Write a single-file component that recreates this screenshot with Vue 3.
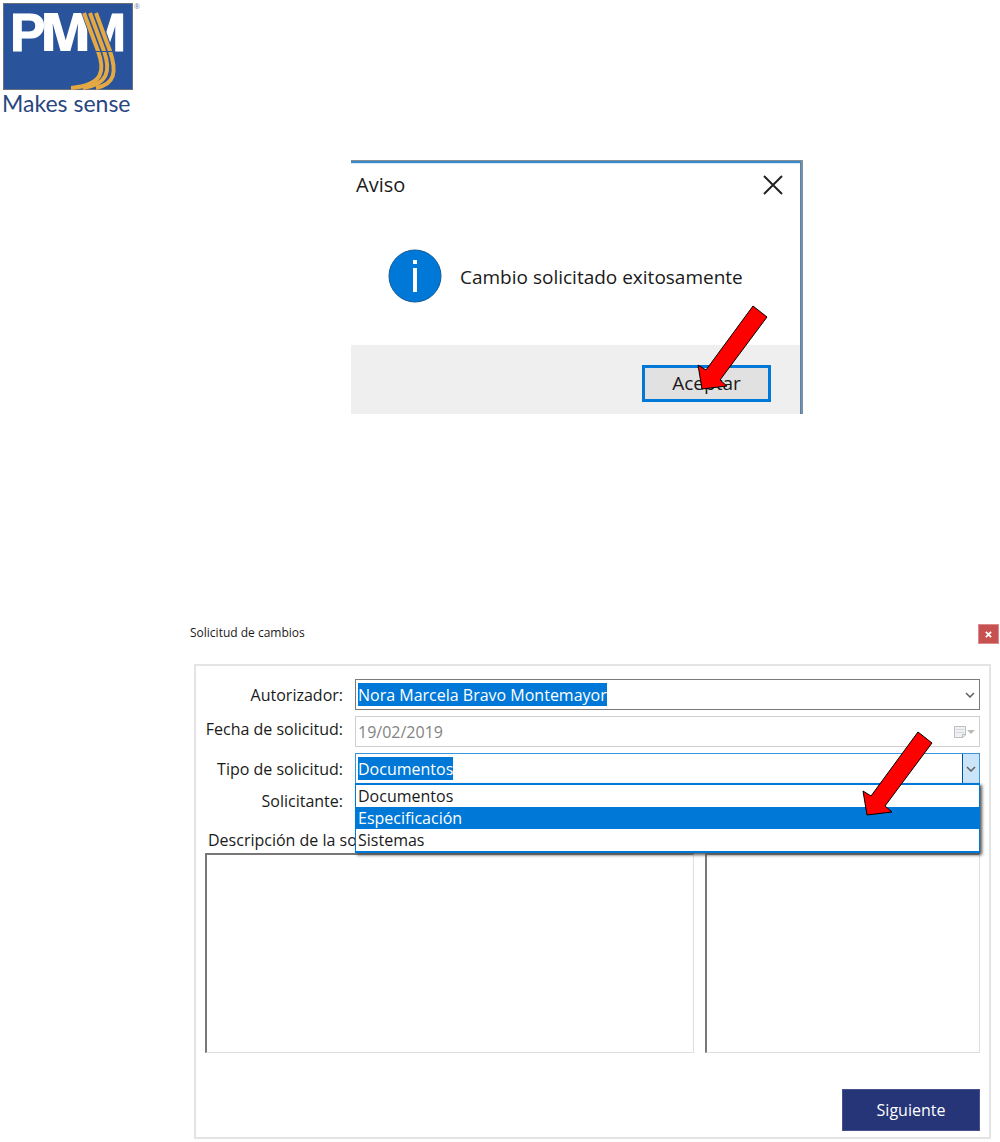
<template>
  <div class="page">
    <header class="brand">
      <svg class="logo" viewBox="0 0 144 118" role="img" aria-label="PMM Makes sense">
        <defs>
          <clipPath id="right-m">
            <path d="M96 8H130V54H112Z" />
          </clipPath>
        </defs>
        <rect x="3.5" y="3.5" width="129" height="86" fill="#29539b" stroke="#6b7078" />
        <g class="logo-letters">
          <text x="10" y="51">P</text>
          <text class="logo-wide" x="40" y="51">M</text>
          <text x="82" y="51" clip-path="url(#right-m)">M</text>
        </g>
        <g fill="none" stroke="#29539b" stroke-width="6">
          <path d="M84 12L98 51" />
          <path d="M90 12L104 51" />
          <path d="M96 12L110 51" />
        </g>
        <g fill="none" stroke="#e5a944" stroke-width="4">
          <path d="M84 13L98 51C105 70 104 85 71 88" />
          <path d="M90 13L104 51C111 71 108 84 83 88" />
          <path d="M96 13L110 51C117 72 115 84 96 88" />
        </g>
        <path d="M94 51.5H115" stroke="#29539b" stroke-width="1" />
        <text class="logo-tagline" x="2" y="112">Makes sense</text>
        <text class="logo-mark" x="134" y="9">®</text>
      </svg>
    </header>

    <section class="notice" role="dialog" aria-labelledby="notice-title">
      <div class="notice-head">
        <h2 id="notice-title">Aviso</h2>
        <button class="notice-close" type="button" aria-label="Cerrar">
          <svg viewBox="0 0 20 20"><path d="M1 1L19 19M19 1L1 19" /></svg>
        </button>
      </div>
      <div class="notice-body">
        <svg class="info" viewBox="0 0 54 54">
          <circle cx="27" cy="27" r="26" fill="#0078d7" stroke="#135995" />
          <path d="M25 11h4v4h-4zM25 19h4v24h-4z" fill="#fff" />
        </svg>
        <p>Cambio solicitado exitosamente</p>
      </div>
      <div class="notice-foot">
        <button class="accept" type="button">Aceptar</button>
      </div>
      <svg class="arrow arrow-accept" viewBox="0 0 72 86"><path :d="arrow" /></svg>
    </section>

    <section class="request">
      <div class="request-head">
        <h2>Solicitud de cambios</h2>
        <button class="request-close" type="button" aria-label="Cerrar">
          <svg viewBox="0 0 8 8"><path d="M1 1L7 7M7 1L1 7" /></svg>
        </button>
      </div>

      <form class="panel" @submit.prevent>
        <div class="row">
          <label for="autorizador">Autorizador:</label>
          <div class="combo">
            <select id="autorizador">
              <option>Nora Marcela Bravo Montemayor</option>
            </select>
            <svg class="chevron" viewBox="0 0 10 6"><path d="M1 1L5 5L9 1" /></svg>
          </div>
        </div>

        <div class="row">
          <label class="label-high" for="fecha">Fecha de solicitud:</label>
          <div class="combo combo-disabled">
            <input id="fecha" type="text" value="19/02/2019" disabled />
            <svg class="calendar" viewBox="0 0 22 14">
              <path d="M1.500 1.500H12.500V10L10 12.500H1.500Z" fill="#eef0f2" stroke="#bdbdbd" />
              <path d="M3 4.500H11M3 7.500H11" stroke="#d5dade" />
              <path d="M12.500 9.500H9.500V12.500" stroke="#bdbdbd" />
              <path d="M14 5H22L18 9Z" fill="#b9bbb2" />
            </svg>
          </div>
        </div>

        <div class="row">
          <label for="tipo">Tipo de solicitud:</label>
          <div class="combo combo-open">
            <select id="tipo" v-model="selected">
              <option v-for="t in types" :key="t">{{ t }}</option>
            </select>
            <span class="drop">
              <svg class="chevron" viewBox="0 0 10 6"><path d="M1 1L5 5L9 1" /></svg>
            </span>
            <ul class="list" role="listbox" aria-label="Tipo de solicitud">
              <li
                v-for="t in types"
                :key="t"
                role="option"
                :aria-selected="t === hovered"
                :class="{ active: t === hovered }"
                @mouseenter="hovered = t"
                @click="selected = t"
              >{{ t }}</li>
            </ul>
            <svg class="arrow arrow-option" viewBox="0 0 72 86"><path :d="arrow" /></svg>
          </div>
        </div>

        <div class="row row-short">
          <label for="solicitante">Solicitante:</label>
          <input id="solicitante" class="plain" type="text" />
        </div>

        <label class="description-label" for="descripcion">Descripción de la so</label>
        <div class="areas">
          <textarea id="descripcion"></textarea>
          <textarea aria-label="Observaciones"></textarea>
        </div>

        <div class="actions">
          <button class="next" type="submit">Siguiente</button>
        </div>
      </form>
    </section>
  </div>
</template>

<script setup>
import { ref } from 'vue';

const types = ['Documentos', 'Especificación', 'Sistemas'];
const selected = ref('Documentos');
const hovered = ref('Especificación');

const arrow = 'M56 1L70 12L23 75L30 81L5 84L1 60L9 65Z';
</script>

<style>
body {
  margin: 0;
  background: #fff;
}
</style>

<style scoped>
.page {
  font-family: "Open Sans", "Noto Sans", sans-serif;
  font-size: 16px;
  color: #1a1a1a;
}

h2,
p,
ul {
  margin: 0;
  padding: 0;
  font-weight: 400;
}

button,
input,
select,
textarea {
  box-sizing: border-box;
  margin: 0;
  font: inherit;
}

.brand {
  height: 160px;
}

.logo {
  display: block;
  width: 144px;
  height: 118px;
}

.logo-letters {
  font-family: "Liberation Sans", sans-serif;
  font-size: 53px;
  font-weight: 700;
  fill: #fff;
  stroke: #fff;
  stroke-width: 1;
}

.logo-wide {
  font-family: "Open Sans", sans-serif;
  font-weight: 800;
  stroke: none;
}

.logo-tagline {
  font-family: Lato, sans-serif;
  font-size: 23px;
  fill: #29467f;
}

.logo-mark {
  font-size: 7px;
  fill: #6f7fa3;
}

/* notice dialog */
.notice {
  position: relative;
  box-sizing: border-box;
  max-width: 452px;
  margin-left: 351px;
  border-top: 3px solid #3c8acb;
  border-right: 3px solid #3c8acb;
  box-shadow: inset 0 1px #d6e9f8;
}

.notice::before {
  content: "";
  position: absolute;
  top: -3px;
  right: -3px;
  bottom: 0;
  left: 0;
  border-top: 1px solid #868d93;
  border-right: 2px solid #868d93;
  pointer-events: none;
}

.notice-head {
  display: flex;
  justify-content: space-between;
  align-items: center;
  height: 43px;
  padding: 0 17px 0 5px;
}

.notice-head h2 {
  font-size: 20px;
}

.notice-close {
  width: 20px;
  height: 20px;
  padding: 0;
  border: 0;
  background: none;
}

.notice-close svg {
  display: block;
  width: 20px;
  height: 20px;
  stroke: #222;
  stroke-width: 2;
}

.notice-body {
  display: flex;
  align-items: center;
  gap: 18px;
  height: 139px;
  padding-left: 37px;
}

.notice-body p {
  font-size: 19px;
  padding-top: 2px;
}

.info {
  width: 54px;
  height: 54px;
}

.notice-foot {
  display: flex;
  justify-content: flex-end;
  align-items: center;
  height: 69px;
  padding-right: 29px;
  padding-top: 7px;
  box-sizing: border-box;
  background: #efefef;
}

.accept {
  width: 129px;
  height: 37px;
  padding: 0;
  border: 3px solid #0078d7;
  background: #e1e1e1;
  color: #1a1a1a;
  font-size: 19px;
  line-height: 30px;
}

.arrow {
  position: absolute;
  z-index: 3;
  width: 72px;
  height: 86px;
  pointer-events: none;
  fill: #f00;
  stroke: #000;
}

.arrow-accept {
  top: 142px;
  right: 31px;
}

.arrow-option {
  top: -23px;
  right: 45px;
}

/* change request window */
.request {
  margin-top: 210px;
  padding-left: 190px;
}

.request-head {
  display: flex;
  justify-content: space-between;
  align-items: flex-start;
  height: 40px;
  padding-right: 1px;
}

.request-head h2 {
  font-size: 12px;
  line-height: 18px;
}

.request-close {
  display: flex;
  justify-content: center;
  align-items: center;
  width: 21px;
  height: 20px;
  padding: 0;
  border: 1px solid #dd8a8d;
  background: #c75050;
}

.request-close svg {
  width: 7px;
  height: 7px;
  stroke: #fff;
  stroke-width: 2;
}

.panel {
  display: flex;
  flex-direction: column;
  gap: 6px;
  margin: 0 9px 0 4px;
  padding: 13px 9px 6px;
  border: 2px solid #e4e4e4;
}

.row {
  display: grid;
  grid-template-columns: 138px 1fr;
  gap: 12px;
  align-items: center;
  height: 31px;
}

.row label {
  text-align: right;
  white-space: nowrap;
}

.row .label-high {
  padding-bottom: 6px;
}

.row-short {
  height: 20px;
}

.combo {
  position: relative;
  display: flex;
  justify-content: space-between;
  align-items: center;
  box-sizing: border-box;
  height: 31px;
  padding: 0 4px 0 2px;
  border: 1px solid #7a7a7a;
}

.combo select {
  appearance: none;
  field-sizing: content;
  height: 23px;
  padding: 0;
  border: 0;
  border-radius: 0;
  outline: 0;
  background: #0078d7;
  color: #fff;
  line-height: 22px;
}

.combo-disabled {
  border-color: #cfcfcf;
}

.combo-disabled input {
  flex: 1;
  min-width: 0;
  padding: 0;
  border: 0;
  background: none;
  color: #838383;
}

.chevron {
  width: 10px;
  height: 6px;
  fill: none;
  stroke: #606060;
  stroke-width: 1.5;
}

.calendar {
  width: 22px;
  height: 14px;
  fill: none;
}

.combo-open {
  padding-right: 0;
  border-color: #3b95dd;
}

.drop {
  display: flex;
  justify-content: center;
  align-items: center;
  box-sizing: border-box;
  width: 17px;
  height: 29px;
  border-left: 1px solid #005499;
  background: #cce4f7;
}

.list {
  position: absolute;
  z-index: 2;
  top: 29px;
  left: -1px;
  right: -1px;
  border: 2px solid #0078d7;
  border-width: 2px 1px;
  background: #fff;
  box-shadow: 2px 2px 3px #555;
  list-style: none;
}

.list li {
  padding-left: 2px;
  line-height: 22px;
}

.list .active {
  background: #0078d7;
  color: #fff;
}

.plain {
  height: 20px;
  border: 1px solid #cfcfcf;
}

.description-label {
  margin-top: 14px;
  padding-left: 3px;
  line-height: 20px;
}

.areas {
  display: grid;
  grid-template-columns: 488fr 275fr;
  gap: 11px;
  margin-top: -3px;
}

.areas textarea {
  width: 100%;
  height: 200px;
  border: 1px solid #dedede;
  border-top: 2px solid #777;
  border-left: 2px solid #777;
  resize: none;
}

.actions {
  display: flex;
  justify-content: flex-end;
  margin-top: 30px;
}

.next {
  width: 138px;
  height: 42px;
  border: 1px solid #46528d;
  background: #263478;
  color: #fff;
}
</style>
